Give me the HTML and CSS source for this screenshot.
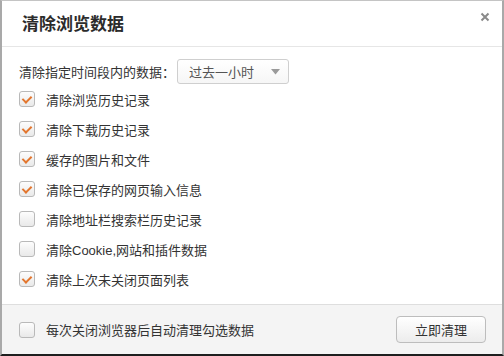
FILE: index.html
```html
<!DOCTYPE html>
<html>
<head>
    <title>清除浏览数据</title>
    <link rel="stylesheet" href="styles.css">
</head>
<body>
    <div class="dialog">
        <div class="header">
            <h2 class="title">清除浏览数据</h2>
            <span class="close">
                <svg width="10" height="10" viewBox="0 0 10 10"><path d="M1.5 1.5 L8.5 8.5 M8.5 1.5 L1.5 8.5" stroke="#8a8a8a" stroke-width="2"/></svg>
            </span>
        </div>
        <div class="content">
            <div class="range-row">
                <span class="label">清除指定时间段内的数据：</span>
                <div class="select">
                    <span>过去一小时</span>
                    <svg width="9" height="6" viewBox="0 0 9 6"><path d="M0 0 H9 L4.5 5.5 Z" fill="#9a9a9a"/></svg>
                </div>
            </div>
            <ul class="options">
                <li><span class="box checked"></span>清除浏览历史记录</li>
                <li><span class="box checked"></span>清除下载历史记录</li>
                <li><span class="box checked"></span>缓存的图片和文件</li>
                <li><span class="box checked"></span>清除已保存的网页输入信息</li>
                <li><span class="box"></span>清除地址栏搜索栏历史记录</li>
                <li><span class="box"></span>清除Cookie,网站和插件数据</li>
                <li><span class="box checked"></span>清除上次未关闭页面列表</li>
            </ul>
        </div>
        <div class="footer">
            <label class="auto"><span class="box"></span>每次关闭浏览器后自动清理勾选数据</label>
            <button class="clear-btn">立即清理</button>
        </div>
    </div>
</body>
</html>
```

FILE: styles.css
```css
body {
    margin: 0;
    font-family: "Liberation Sans", "Noto Sans CJK SC", sans-serif;
    background-color: #FFFFFF;
}

.dialog {
    width: 504px;
    height: 356px;
    box-sizing: border-box;
    border: 2px solid #a9a9a9;
    border-top: 1px solid #c4c4c4;
    border-bottom: 2px solid #1e1e1e;
    display: flex;
    flex-direction: column;
    background-color: #FFFFFF;
}

.header {
    height: 45px;
    flex-shrink: 0;
    display: flex;
    align-items: center;
    justify-content: space-between;
    padding: 0 12px 0 20px;
    border-bottom: 1px solid #e6e6e6;
}

.title {
    margin: 0;
    font-size: 17px;
    font-weight: bold;
    color: #2b2b2b;
    position: relative;
    top: -1px;
}

.close {
    display: flex;
    position: relative;
    top: -7px;
}

.content {
    flex: 1;
    padding: 12px 17px 0;
}

.range-row {
    display: flex;
    align-items: center;
    height: 25px;
    font-size: 13px;
    color: #333;
}

.label {
    margin-right: 2px;
}

.select {
    width: 112px;
    height: 25px;
    box-sizing: border-box;
    border: 1px solid #cfcfcf;
    border-radius: 3px;
    display: flex;
    align-items: center;
    justify-content: space-between;
    padding: 0 8px 0 11px;
    color: #555;
    background: linear-gradient(#ffffff, #f6f6f6);
}

.options {
    list-style: none;
    margin: 0;
    padding: 0;
}

.options li {
    height: 30px;
    display: flex;
    align-items: center;
    font-size: 13px;
    color: #333;
}

.box {
    width: 16px;
    height: 16px;
    box-sizing: border-box;
    border: 1px solid #b9b9b9;
    border-radius: 3px;
    background: linear-gradient(#fdfdfd, #e9e9e9);
    margin-right: 11px;
    flex-shrink: 0;
    position: relative;
}

.box.checked::after {
    content: "";
    position: absolute;
    left: 4px;
    top: 2px;
    width: 4px;
    height: 7px;
    border-right: 2px solid #e3762e;
    border-bottom: 2px solid #e3762e;
    transform: rotate(45deg);
}

.footer {
    height: 49px;
    flex-shrink: 0;
    border-top: 1px solid #dedede;
    background-color: #f4f4f4;
    display: flex;
    align-items: center;
    justify-content: space-between;
    padding: 0 16px 0 17px;
}

.auto {
    display: flex;
    align-items: center;
    font-size: 13px;
    color: #333;
}

.clear-btn {
    width: 90px;
    height: 27px;
    border: 1px solid #bdbdbd;
    border-radius: 4px;
    background: linear-gradient(#ffffff, #ececec);
    font-family: inherit;
    font-size: 13px;
    color: #333;
    cursor: pointer;
    padding: 0;
}
```
